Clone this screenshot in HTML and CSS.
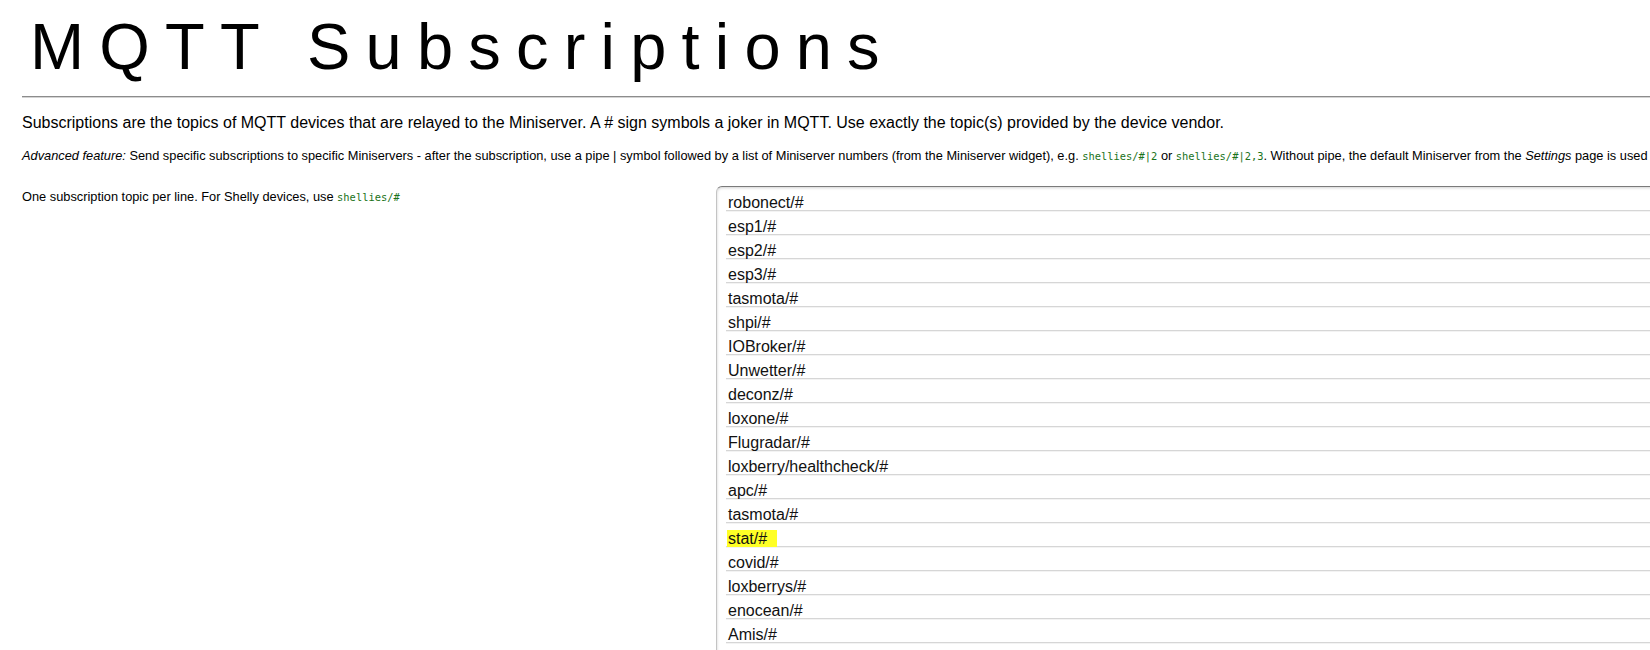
FILE: index.html
```html
<!DOCTYPE html>
<html lang="en">
<head>
<meta charset="utf-8">
<title>MQTT Subscriptions</title>
<link rel="stylesheet" href="styles.css">
</head>
<body>
<div class="page">
  <h1 class="title">MQTT Subscriptions</h1>
  <hr class="rule">
  <p class="intro">Subscriptions are the topics of MQTT devices that are relayed to the Miniserver. A # sign symbols a joker in MQTT. Use exactly the topic(s) provided by the device vendor.</p>
  <p class="note"><i>Advanced feature:</i> Send specific subscriptions to specific Miniservers - after the subscription, use a pipe | symbol followed by a list of Miniserver numbers (from the Miniserver widget), e.g. <code class="code">shellies/#|2</code> or <code class="code">shellies/#|2,3</code>. Without pipe, the default Miniserver from the <i>Settings</i> page is used</p>
  <div class="field">
    <div class="field-label">One subscription topic per line. For Shelly devices, use <code class="code">shellies/#</code></div>
    <div class="ta">
      <div class="ta-lines">
        <div class="ta-row">robonect/#</div>
        <div class="ta-row">esp1/#</div>
        <div class="ta-row">esp2/#</div>
        <div class="ta-row">esp3/#</div>
        <div class="ta-row">tasmota/#</div>
        <div class="ta-row">shpi/#</div>
        <div class="ta-row">IOBroker/#</div>
        <div class="ta-row">Unwetter/#</div>
        <div class="ta-row">deconz/#</div>
        <div class="ta-row">loxone/#</div>
        <div class="ta-row">Flugradar/#</div>
        <div class="ta-row">loxberry/healthcheck/#</div>
        <div class="ta-row">apc/#</div>
        <div class="ta-row">tasmota/#</div>
        <div class="ta-row"><span class="hl">stat/#</span></div>
        <div class="ta-row">covid/#</div>
        <div class="ta-row">loxberrys/#</div>
        <div class="ta-row">enocean/#</div>
        <div class="ta-row">Amis/#</div>
        <div class="ta-row">&nbsp;</div>
      </div>
    </div>
  </div>
</div>
</body>
</html>
```

FILE: styles.css
```css
html {
  overflow: hidden;
}

body {
  margin: 0;
  background: #ffffff;
  color: #000000;
  font-family: "Liberation Sans", Arial, sans-serif;
}

.page {
  width: 1900px;
  padding-left: 22px;
}

.title {
  margin: 9px 0 0;
  padding-left: 8px;
  font-size: 65px;
  line-height: 75px;
  font-weight: normal;
  letter-spacing: 15.2px;
}

.rule {
  margin: 12px 0 0;
  height: 0;
  border: 0;
  border-top: 1px solid #8c8c8c;
  box-shadow: 0 1px 0 #d4d4d4;
}

.intro {
  margin: 16px 0 0;
  font-size: 16px;
  line-height: 20px;
}

.note {
  margin: 15px 0 0;
  font-size: 12.8px;
  line-height: 16px;
  white-space: nowrap;
}

.code {
  font-family: "DejaVu Sans Mono", "Liberation Mono", monospace;
  font-size: 10.4px;
  color: #1a731a;
}

.field {
  display: flex;
  margin-top: 22px;
}

.field-label {
  width: 694px;
  flex: none;
  padding-top: 3px;
  font-size: 12.8px;
  line-height: 15px;
}

.ta {
  width: 1100px;
  height: 520px;
  flex: none;
  border: 1px solid #c4c4c4;
  border-top-color: #7a7a7a;
  border-radius: 6px;
  box-shadow: inset 0 1px 3px rgba(0, 0, 0, 0.18);
  padding: 4px 0 0 9px;
  background: #ffffff;
}

.ta-lines {
  background-image: repeating-linear-gradient(
    to bottom,
    transparent 0,
    transparent 19px,
    #d6d6d6 19px,
    #d6d6d6 20px,
    #f3f3f3 20px,
    #f3f3f3 21px,
    transparent 21px,
    transparent 24px
  );
}

.ta-row {
  height: 24px;
  padding-left: 2px;
  font-size: 16px;
  line-height: 24px;
  color: #111111;
}

.hl {
  background: #ffff26;
  margin-left: -1px;
  padding: 0 10px 0 1px;
}
```
